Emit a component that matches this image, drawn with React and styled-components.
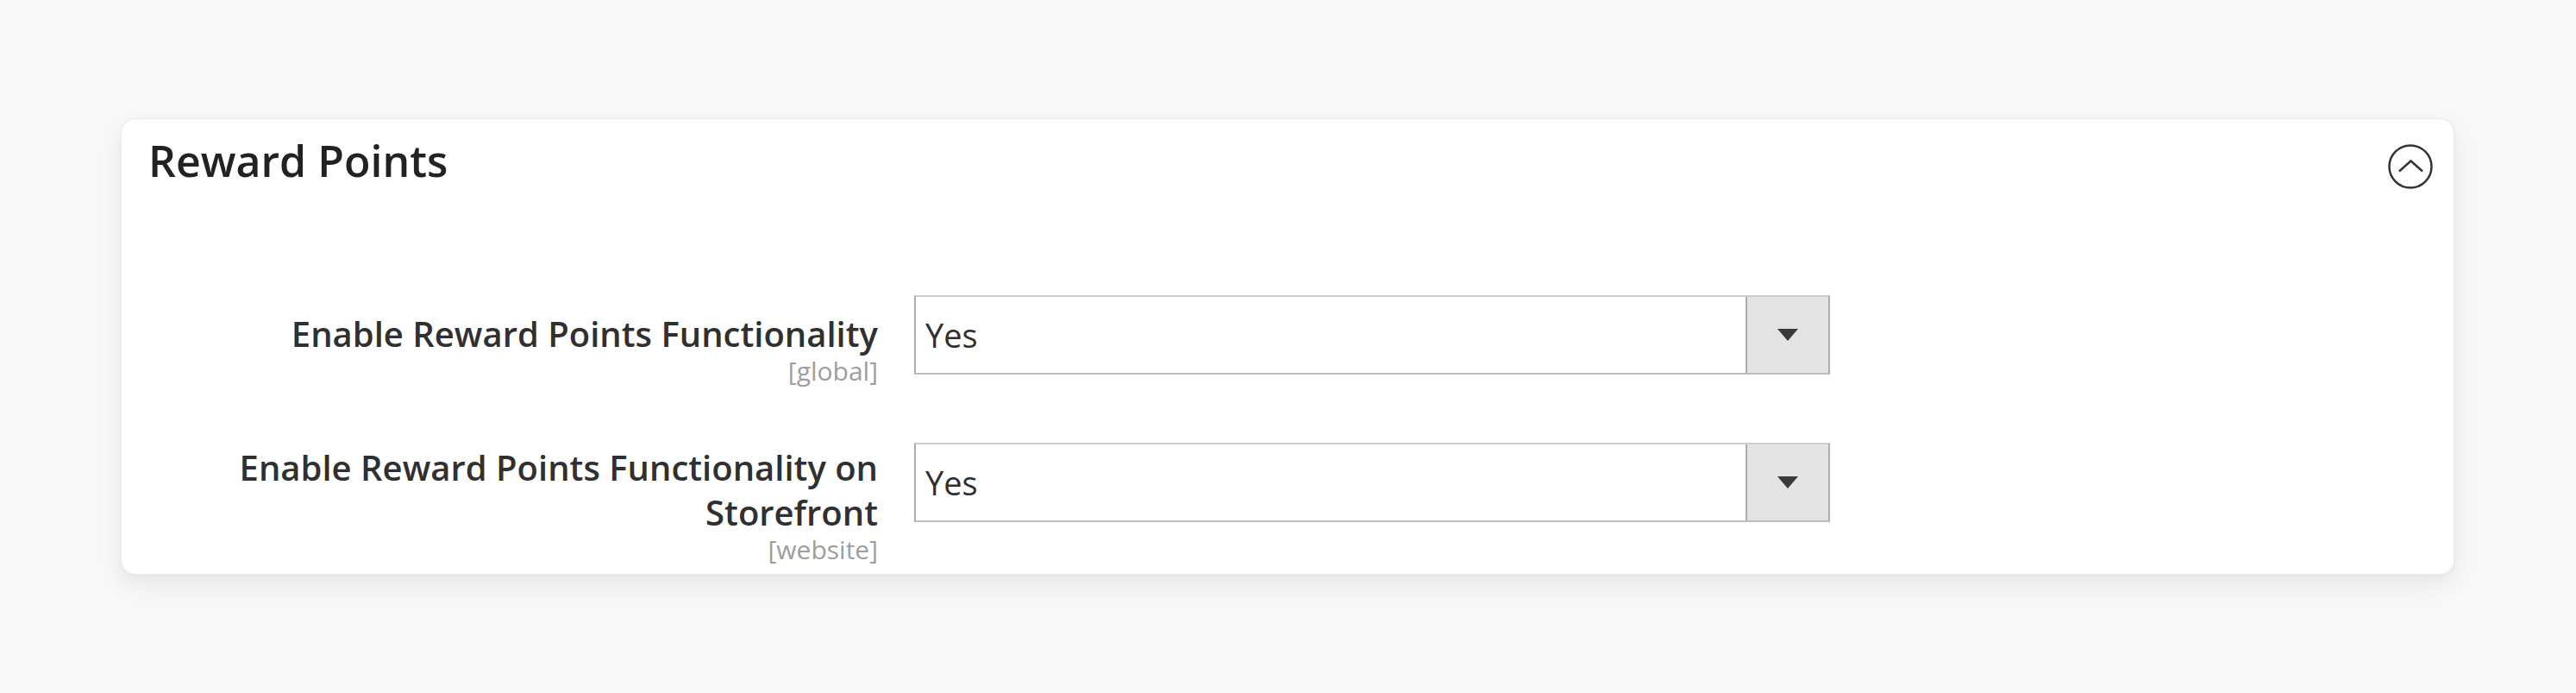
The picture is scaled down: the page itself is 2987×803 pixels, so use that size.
import styled, { createGlobalStyle } from "styled-components";

const GlobalStyle = createGlobalStyle`
  html, body {
    margin: 0;
    padding: 0;
    background: #f8f8f8;
  }
  body {
    font-family: "Open Sans", "Liberation Sans", Arial, sans-serif;
    color: #303030;
  }
`;

const fields = [
  {
    label: "Enable Reward Points Functionality",
    scope: "[global]",
    value: "Yes",
    offset: 19,
  },
  {
    label: "Enable Reward Points Functionality on Storefront",
    scope: "[website]",
    value: "Yes",
    offset: 3,
  },
];

const App = () => {
  return (
    <Page>
      <GlobalStyle />
      <Card>
        <CardHeader>
          <Title>Reward Points</Title>
          <CollapseButton aria-label="Collapse">
            <svg width="52" height="52" viewBox="0 0 52 52" fill="none">
              <circle cx="26" cy="26" r="24.5" stroke="#333" strokeWidth="2.5" />
              <polyline
                points="13,31.5 26.5,19.5 40,31.5"
                stroke="#333"
                strokeWidth="2.5"
                fill="none"
              />
            </svg>
          </CollapseButton>
        </CardHeader>
        <Fields>
          {fields.map((f) => (
            <FieldRow key={f.label}>
              <LabelCol $offset={f.offset}>
                <LabelText>{f.label}</LabelText>
                <Scope>{f.scope}</Scope>
              </LabelCol>
              <Select>
                <SelectValue>{f.value}</SelectValue>
                <SelectToggle>
                  <Arrow />
                </SelectToggle>
              </Select>
            </FieldRow>
          ))}
        </Fields>
      </Card>
    </Page>
  );
};

const Page = styled.div`
  padding: 137px 141px 0 140px;
  min-height: 803px;
  box-sizing: border-box;
`;
const Card = styled.section`
  background: #fff;
  border: 1px solid #ebebeb;
  border-radius: 17px;
  box-shadow: 0 12px 30px rgba(0, 0, 0, 0.07), 0 2px 6px rgba(0, 0, 0, 0.03);
  padding: 19px 24px 11px 31px;
`;
const CardHeader = styled.div`
  display: flex;
  justify-content: space-between;
  align-items: flex-start;
`;
const Title = styled.h2`
  margin: 0;
  font-size: 50px;
  line-height: 58px;
  font-weight: 600;
  color: #222;
`;
const CollapseButton = styled.button`
  margin-top: 10px;
  padding: 0;
  border: none;
  background: transparent;
  width: 52px;
  height: 52px;
  cursor: pointer;
  display: flex;
`;
const Fields = styled.div`
  margin-top: 123px;
  display: flex;
  flex-direction: column;
  gap: 66px;
`;
const FieldRow = styled.div`
  display: grid;
  grid-template-columns: 846px 1062px;
  column-gap: 42px;
  align-items: start;
`;
const LabelCol = styled.div`
  padding-top: ${(p) => p.$offset}px;
  text-align: right;
`;
const LabelText = styled.div`
  font-size: 40px;
  line-height: 52px;
  font-weight: 600;
  color: #303030;
`;
const Scope = styled.div`
  font-size: 30px;
  line-height: 34px;
  color: #9e9e9e;
`;
const Select = styled.div`
  height: 92px;
  box-sizing: border-box;
  border: 2px solid #adadad;
  border-top-color: #cdcdcd;
  border-bottom-color: #bdbdbd;
  display: flex;
  align-items: stretch;
  background: #fff;
`;
const SelectValue = styled.div`
  flex: 1;
  display: flex;
  align-items: center;
  padding-left: 11px;
  font-size: 38px;
  color: #303030;
`;
const SelectToggle = styled.div`
  width: 94px;
  border-left: 2px solid #adadad;
  background: #e3e3e3;
  display: flex;
  align-items: center;
  justify-content: center;
`;
const Arrow = styled.span`
  width: 0;
  height: 0;
  border-left: 12px solid transparent;
  border-right: 12px solid transparent;
  border-top: 14px solid #3a3a3a;
`;

export default App;
